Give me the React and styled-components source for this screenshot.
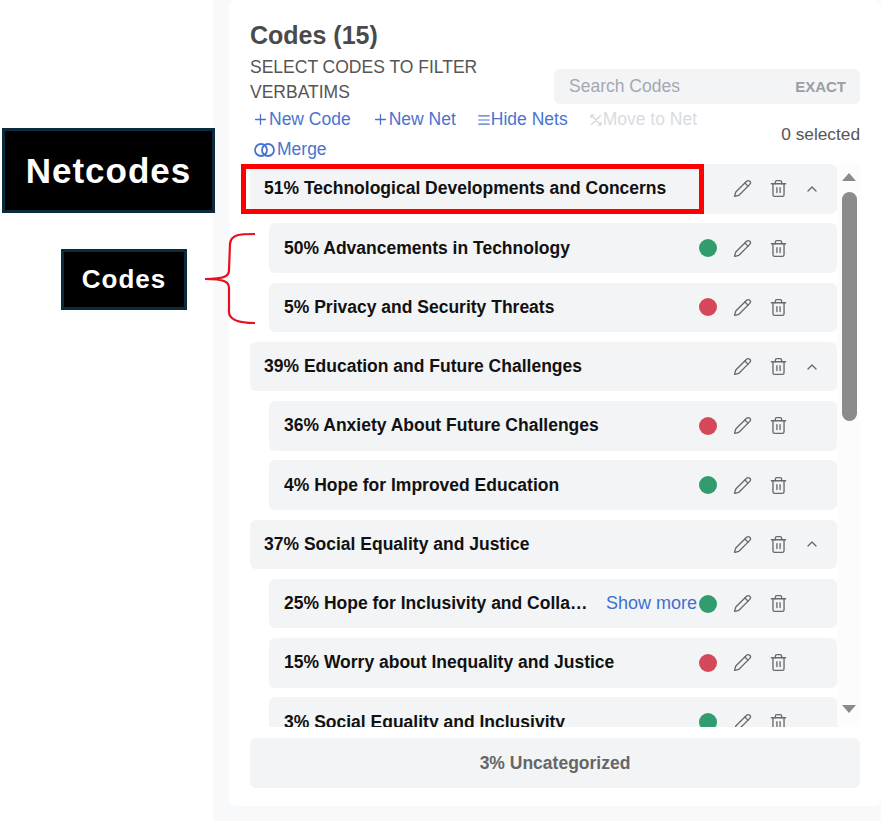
import React from 'react';
import styled, { createGlobalStyle } from 'styled-components';
import { Pencil, Trash2, ChevronUp, Plus, AlignJustify } from 'lucide-react';

const GlobalStyle = createGlobalStyle`
  html, body { margin: 0; padding: 0; background: #fff; }
  * { box-sizing: border-box; }
  body { font-family: 'Liberation Sans', Arial, sans-serif; }
`;

const Page = styled.div`
  position: relative;
  width: 881px;
  height: 821px;
  overflow: hidden;
  padding-left: 213px;
  background: #fff;
`;
const Backdrop = styled.div`
  height: 100%;
  padding: 0 0 15px 16px;
  background: #f8f9fb;
`;
const Card = styled.section`
  height: 100%;
  padding: 20px 21px 18px 21px;
  background: #fff;
  border-radius: 6px;
  display: flex;
  flex-direction: column;
`;
const Title = styled.h2`
  margin: 0;
  height: 30px;
  font-size: 25px;
  line-height: 30px;
  font-weight: 700;
  color: #4a4a4a;
`;
const TopRow = styled.div`
  display: flex;
  justify-content: space-between;
  align-items: flex-end;
  margin-top: 5px;
`;
const Hint = styled.p`
  margin: 0;
  width: 290px;
  font-size: 17.5px;
  line-height: 25px;
  color: #555;
`;
const Search = styled.div`
  width: 306px;
  height: 35px;
  margin-bottom: 1px;
  padding: 0 14px 0 15px;
  display: flex;
  align-items: center;
  justify-content: space-between;
  background: #f3f4f6;
  border-radius: 6px;
  color: #a3a8b1;
  font-size: 17.5px;
`;
const Exact = styled.span`
  font-size: 15px;
  font-weight: 700;
  color: #9a9ea5;
`;
const ToolRow = styled.div`
  display: flex;
  justify-content: space-between;
  align-items: center;
  height: 59px;
`;
const Tools = styled.div`
  width: 470px;
  display: flex;
  flex-wrap: wrap;
  column-gap: 21px;
  padding-left: 2px;
`;
const Tool = styled.span`
  height: 30px;
  display: inline-flex;
  align-items: center;
  font-size: 17.5px;
  color: ${(p) => (p.$disabled ? '#d9dbdf' : '#4a73cf')};
  svg { flex: none; }
`;
const Selected = styled.span`
  font-size: 17.3px;
  color: #555;
`;
const ListArea = styled.div`
  display: flex;
  height: 563px;
`;
const List = styled.div`
  width: 587px;
  height: 100%;
  overflow: hidden;
  display: flex;
  flex-direction: column;
  gap: 9.75px;
`;
const Row = styled.div`
  flex: none;
  height: 49.5px;
  margin-left: ${(p) => (p.$net ? 0 : 19)}px;
  padding: 0 15px 0 ${(p) => (p.$net ? 14 : 15)}px;
  display: flex;
  align-items: center;
  background: #f3f4f6;
  border-radius: 6px;
`;
const Label = styled.span`
  flex: 1;
  min-width: 0;
  white-space: nowrap;
  overflow: hidden;
  text-overflow: ellipsis;
  font-size: 17.5px;
  font-weight: 700;
  color: #111;
`;
const ShowMore = styled.span`
  flex: none;
  margin: 0 2px 0 15px;
  font-size: 18px;
  color: #3f6fd2;
  white-space: nowrap;
`;
const Dot = styled.span`
  flex: none;
  width: 18px;
  height: 18px;
  border-radius: 50%;
  background: ${(p) => (p.$tone === 'good' ? '#339c6e' : '#d5485a')};
`;
const IconSlot = styled.span`
  flex: none;
  width: 20px;
  height: 20px;
  display: flex;
  align-items: center;
  justify-content: center;
  margin-left: ${(p) => p.$gap}px;
  color: #6a6a6a;
`;
const Rail = styled.div`
  width: 23px;
  height: 100%;
  padding-left: 5px;
  display: flex;
  flex-direction: column;
  align-items: flex-start;
  background: #fcfcfd;
`;
const Arrow = styled.span`
  width: 0;
  height: 0;
  margin: ${(p) => (p.$down ? '284px 0 0' : '9px 0 0')};
  border-left: 7.5px solid transparent;
  border-right: 7.5px solid transparent;
  border-bottom: ${(p) => (p.$down ? '0' : '8px solid #8b8b8b')};
  border-top: ${(p) => (p.$down ? '8px solid #8b8b8b' : '0')};
`;
const Thumb = styled.span`
  width: 15px;
  height: 229px;
  margin-top: 11px;
  border-radius: 8px;
  background: #8b8b8b;
`;
const Uncategorized = styled.div`
  height: 50px;
  margin-top: 11px;
  display: flex;
  align-items: center;
  justify-content: center;
  background: #f3f4f6;
  border-radius: 6px;
  font-size: 17.5px;
  font-weight: 700;
  color: #666;
`;
const Callout = styled.div`
  position: absolute;
  left: ${(p) => p.$x}px;
  top: ${(p) => p.$y}px;
  width: ${(p) => p.$w}px;
  height: ${(p) => p.$h}px;
  display: flex;
  align-items: center;
  justify-content: center;
  background: #000;
  border: 3px solid #0b2a3b;
  color: #fff;
  font-weight: 700;
  font-size: ${(p) => p.$size}px;
  letter-spacing: 1px;
`;
const Highlight = styled.div`
  position: absolute;
  left: 241px;
  top: 164px;
  width: 463px;
  height: 50px;
  border: 5px solid #ff0000;
`;
const Brace = styled.svg`
  position: absolute;
  left: 200px;
  top: 228px;
`;

const rows = [
  { net: true, text: '51% Technological Developments and Concerns' },
  { text: '50% Advancements in Technology', tone: 'good' },
  { text: '5% Privacy and Security Threats', tone: 'bad' },
  { net: true, text: '39% Education and Future Challenges' },
  { text: '36% Anxiety About Future Challenges', tone: 'bad' },
  { text: '4% Hope for Improved Education', tone: 'good' },
  { net: true, text: '37% Social Equality and Justice' },
  { text: '25% Hope for Inclusivity and Collaboration', tone: 'good', more: true },
  { text: '15% Worry about Inequality and Justice', tone: 'bad' },
  { text: '3% Social Equality and Inclusivity', tone: 'good' },
];

function MoveIcon() {
  return (
    <svg width="14" height="16" viewBox="0 0 14 16" fill="none" stroke="currentColor" strokeWidth="1.5">
      <path d="M2 3l10 10M12 3L2 13M2 3h3M2 3v3M12 13H9M12 13v-3" />
    </svg>
  );
}

function MergeIcon() {
  return (
    <svg width="25" height="16" viewBox="0 0 25 16" fill="none" stroke="currentColor" strokeWidth="1.8">
      <circle cx="9" cy="8" r="6" />
      <circle cx="16" cy="8" r="6" />
    </svg>
  );
}

function CodeRow({ net, text, tone, more }) {
  return (
    <Row $net={net}>
      <Label>{text}</Label>
      {more && <ShowMore>Show more</ShowMore>}
      {tone && <Dot $tone={tone} />}
      <IconSlot $gap={15}><Pencil size={19} strokeWidth={1.7} /></IconSlot>
      <IconSlot $gap={16}><Trash2 size={19} strokeWidth={1.7} /></IconSlot>
      <IconSlot $gap={14}>{net && <ChevronUp size={16} strokeWidth={2} />}</IconSlot>
    </Row>
  );
}

export default function App() {
  return (
    <Page>
      <GlobalStyle />
      <Backdrop>
        <Card>
          <Title>Codes (15)</Title>
          <TopRow>
            <Hint>SELECT CODES TO FILTER VERBATIMS</Hint>
            <Search>
              Search Codes
              <Exact>EXACT</Exact>
            </Search>
          </TopRow>
          <ToolRow>
            <Tools>
              <Tool><Plus size={17} strokeWidth={1.8} />New Code</Tool>
              <Tool><Plus size={17} strokeWidth={1.8} />New Net</Tool>
              <Tool><AlignJustify size={14} strokeWidth={2} />Hide Nets</Tool>
              <Tool $disabled><MoveIcon />Move to Net</Tool>
              <Tool><MergeIcon />Merge</Tool>
            </Tools>
            <Selected>0 selected</Selected>
          </ToolRow>
          <ListArea>
            <List>
              {rows.map((row) => (
                <CodeRow key={row.text} {...row} />
              ))}
            </List>
            <Rail>
              <Arrow />
              <Thumb />
              <Arrow $down />
            </Rail>
          </ListArea>
          <Uncategorized>3% Uncategorized</Uncategorized>
        </Card>
      </Backdrop>
      <Callout $x={2} $y={128} $w={213} $h={85} $size={35}>Netcodes</Callout>
      <Callout $x={61} $y={249} $w={126} $h={61} $size={26}>Codes</Callout>
      <Highlight />
      <Brace width="60" height="100" viewBox="0 0 60 100" fill="none" stroke="#e8101c" strokeWidth="2.2">
        <path d="M55 6 C40 6 31 6 30 16 L29 42 C29 48 25 51 5 51 C25 51 29 54 29 60 L29 84 C29 92 38 95 55 95" />
      </Brace>
    </Page>
  );
}
